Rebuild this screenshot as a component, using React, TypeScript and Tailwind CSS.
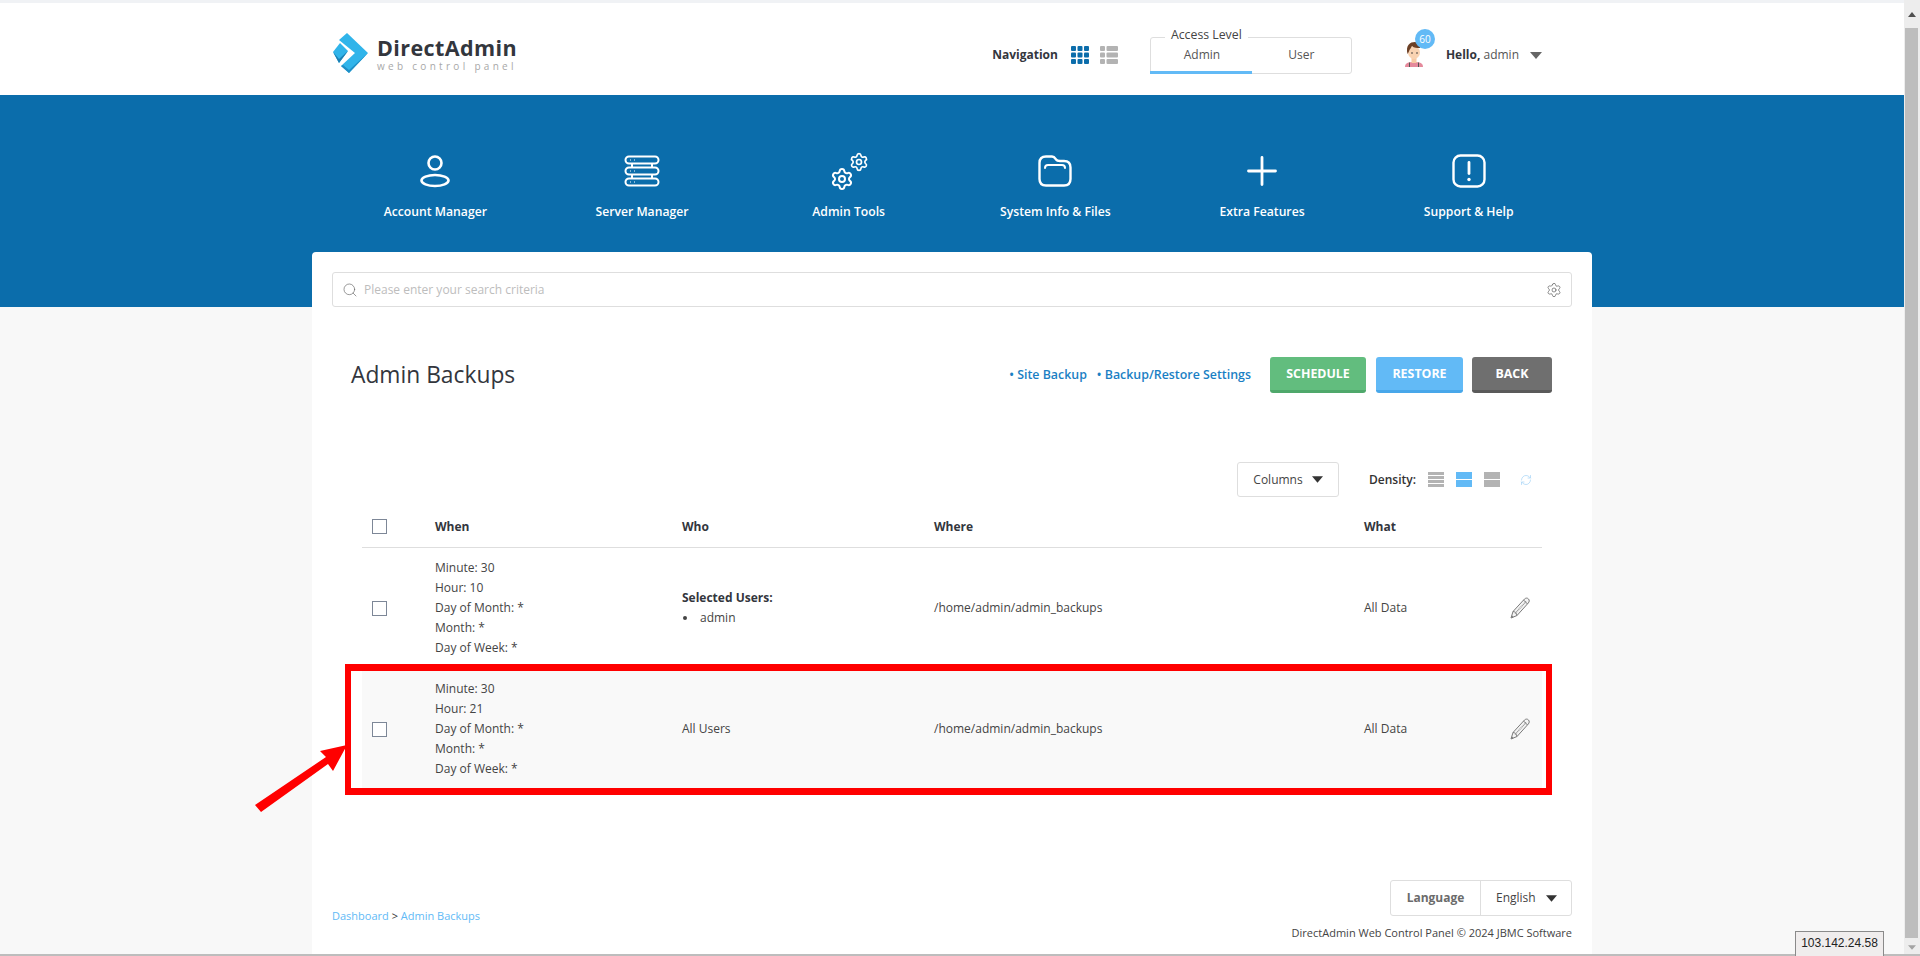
import React from "react";
import { Search, Settings, RefreshCw } from "lucide-react";

function Caret({ className }: { className: string }) {
  return (
    <svg viewBox="0 0 12 7" className={className}>
      <path d="M0 0h12L6 7z" fill="currentColor" />
    </svg>
  );
}

function Logo() {
  return (
    <div className="flex items-center -mt-[4px]">
      <svg viewBox="0 0 36 41" className="w-[36px] h-[41px] mr-[8px]">
        <path d="M14 0L35 20L16 40L8 33L22 20L6 7Z" fill="#30b4ea" />
        <path d="M35 20L16 40L8 33L10 32L16 37Z" fill="#1f8fc6" />
        <path d="M7 10L15 18L6 30L0 19Z" fill="#30b4ea" />
        <path d="M15 18L6 30L0 19L6 26Z" fill="#1b7fb3" />
      </svg>
      <div className="flex flex-col">
        <span className="text-[21.5px] leading-[25px] font-bold text-[#33363d] tracking-[0.4px]">DirectAdmin</span>
        <span className="text-[10px] leading-[12px] text-[#a8a8a8] tracking-[3.3px]">web control panel</span>
      </div>
    </div>
  );
}

function NavItem({ label, children }: { label: string; children: React.ReactNode }) {
  return (
    <div className="flex flex-col items-center">
      <div className="h-[38px] flex items-center justify-center text-white">{children}</div>
      <span className="mt-[12px] text-[12.2px] leading-[20px] font-semibold text-white">{label}</span>
    </div>
  );
}

function Checkbox() {
  return <span className="block w-[15px] h-[15px] border border-[#7d8797] bg-white" />;
}

function Schedule({ hour }: { hour: string }) {
  return (
    <div className="text-[12px] leading-[20px] text-[#444]">
      <div>Minute: 30</div>
      <div>Hour: {hour}</div>
      <div>Day of Month: *</div>
      <div>Month: *</div>
      <div>Day of Week: *</div>
    </div>
  );
}

function PencilIcon() {
  return (
    <svg viewBox="0 0 20 22" className="w-[20px] h-[22px]" fill="none" stroke="#7a7a7a" strokeWidth="1">
      <path d="M1 21L3 14.500L14.500 2C15.800 0.800 17.500 0.800 18.500 2C19.600 3.200 19.400 4.800 18.300 6L7 18.500Z" fill="#f4f4f4" />
      <path d="M3 14.500C5 14.500 6.500 16 7 18.500" />
      <path d="M1.600 19L3 20.400" strokeWidth="1.400" />
      <path d="M5 16.500L16.500 4" strokeDasharray="1 0.700" stroke="#999" strokeWidth="1.400" />
      <path d="M13.500 3L17.500 7" />
    </svg>
  );
}

const rowGrid = "grid grid-cols-[73px_247px_252px_430px_1fr_60px] items-center";

function Row({ hour, who, shaded }: { hour: string; who: React.ReactNode; shaded?: boolean }) {
  return (
    <div className={`${rowGrid} h-[121px] pb-[1px] text-[12px] text-[#444] ${shaded ? "bg-[#f9f9f9]" : "bg-white"}`}>
      <div className="pl-[10px]"><Checkbox /></div>
      <Schedule hour={hour} />
      <div>{who}</div>
      <div>/home/admin/admin_backups</div>
      <div>All Data</div>
      <div className="pl-[28px]"><PencilIcon /></div>
    </div>
  );
}

function Bars({ rows, color }: { rows: number; color: string }) {
  return (
    <span className="flex flex-col justify-between w-[16px] h-[15px]">
      {Array.from({ length: rows }).map((_, i) => (
        <span key={i} className={`block flex-1 ${color} ${i > 0 ? "mt-[1px]" : ""}`} />
      ))}
    </span>
  );
}

export default function App() {
  return (
    <div className="relative h-[956px] w-full overflow-hidden bg-[#f8f8f8] font-['Open_Sans',sans-serif] text-[#333] flex">
      <div className="w-[1904px] shrink-0 flex flex-col">
        <div className="h-[3px] bg-[#f0f2f5]" />
        <header className="h-[92px] bg-white flex items-center pt-[12px] pl-[333px] pr-[362px]">
          <Logo />
          <div className="ml-auto flex items-center">
            <span className="text-[12px] font-bold text-[#33363d]">Navigation</span>
            <svg viewBox="0 0 18 18" className="w-[18px] h-[18px] ml-[13px]" fill="#0b6dab">
              {[0, 6.5, 13].flatMap((x) =>
                [0, 6.5, 13].map((y) => <rect key={`${x}-${y}`} x={x} y={y} width="5" height="5" rx="1" />)
              )}
            </svg>
            <svg viewBox="0 0 18 18" className="w-[18px] h-[18px] ml-[11px]" fill="#b3b3b3">
              {[0, 6.5, 13].map((y) => (
                <g key={y}>
                  <rect x="0" y={y} width="5" height="5" rx="1" />
                  <rect x="6.5" y={y} width="11.5" height="5" rx="1" />
                </g>
              ))}
            </svg>
            <div className="relative ml-[32px] w-[202px] h-[37px] border border-[#dedede] rounded-[3px] flex text-[12px] text-[#555]">
              <span className="absolute -top-[11px] left-[14px] bg-white px-[6px] text-[12.3px] leading-[16px] text-[#444]">Access Level</span>
              <span className="w-[102px] pt-[2px] flex items-center justify-center border-b-[3px] border-[#62baf6] -mb-px -ml-px pl-[2px]">Admin</span>
              <span className="flex-1 flex items-center justify-center">User</span>
            </div>
            <div className="relative ml-[52px] w-[22px] h-[28px]">
              <svg viewBox="0 0 20 26" className="w-[20px] h-[26px]">
                <path d="M1 26c0-4 3-5 9-5s9 1 9 5z" fill="#e58a9c" />
                <path d="M5.500 21.500V26M14.500 21.500V26" stroke="#555" strokeWidth="1" />
                <rect x="7.500" y="16" width="5" height="6" fill="#f7c9a4" />
                <ellipse cx="10" cy="11.500" rx="6" ry="6.500" fill="#f9d3b2" />
                <path d="M3.500 13C1.500 4 6 1 11 1c4 0 6 3 5 6-3 0-6 0-8-2-1 2-2 3-2.500 4-.5 1-1 3-2 4z" fill="#6b3f25" />
                <circle cx="8" cy="12" r="0.800" fill="#333" />
                <circle cx="13" cy="12" r="0.800" fill="#333" />
              </svg>
              <span className="absolute -top-[12px] left-[11px] w-[20px] h-[20px] rounded-full bg-[#62baf6] text-white text-[10px] leading-[20px] text-center">60</span>
            </div>
            <span className="ml-[20px] text-[12px] text-[#555]"><b className="text-[#33363d]">Hello,</b> admin</span>
            <Caret className="ml-[11px] w-[12px] h-[7px] text-[#666]" />
          </div>
        </header>

        <div className="h-[212px] bg-[#0b6dab] shrink-0 pl-[332px] pr-[332px] pt-[57px]">
          <div className="grid grid-cols-6">
            <NavItem label="Account Manager">
              <svg viewBox="0 0 32 34" className="w-[32px] h-[34px]" fill="none" stroke="white" strokeWidth="2.6">
                <circle cx="16" cy="9" r="6.5" />
                <ellipse cx="16" cy="26.5" rx="13.5" ry="5.5" />
              </svg>
            </NavItem>
            <NavItem label="Server Manager">
              <svg viewBox="0 0 36 32" className="w-[36px] h-[32px]" fill="none" stroke="white" strokeWidth="2">
                <rect x="1.5" y="1.5" width="33" height="7" rx="3.5" />
                <rect x="1.5" y="12.5" width="33" height="7" rx="3.5" />
                <rect x="1.5" y="23.5" width="33" height="7" rx="3.5" />
                <path d="M8 8.5v4M28 8.5v4M8 19.5v4M28 19.5v4" />
                <path d="M6 5h1M10 5h1M6 16h1M10 16h1M6 27h1M10 27h1" strokeWidth="1" />
              </svg>
            </NavItem>
            <NavItem label="Admin Tools">
              <svg viewBox="0 0 40 40" className="w-[40px] h-[40px]">
                <Settings x={1} y={16} width={24} height={24} stroke="white" strokeWidth={2} />
                <Settings x={20} y={1} width={20} height={20} stroke="white" strokeWidth={2} />
              </svg>
            </NavItem>
            <NavItem label="System Info & Files">
              <svg viewBox="0 0 34 32" className="w-[34px] h-[32px]" fill="none" stroke="white" strokeWidth="2.4" strokeLinecap="round">
                <path d="M1.500 8C1.500 4 4 1.500 8 1.500h6c2.500 0 3 1.500 4 3s2 1.500 4 1.500h4c4 0 6.500 2.500 6.500 6.500V24c0 4-2.500 6.500-6.500 6.500H8C4 30.500 1.500 28 1.500 24z" />
                <path d="M7 13c0-2 1-3 3-3h14c2 0 3 1 3 3" strokeWidth="2" />
              </svg>
            </NavItem>
            <NavItem label="Extra Features">
              <svg viewBox="0 0 30 30" className="w-[30px] h-[30px]" fill="none" stroke="white" strokeWidth="2.800" strokeLinecap="round">
                <path d="M15 1.500v27M1.500 15h27" />
              </svg>
            </NavItem>
            <NavItem label="Support & Help">
              <svg viewBox="0 0 34 34" className="w-[34px] h-[34px]" fill="none" stroke="white" strokeWidth="2.400" strokeLinecap="round">
                <rect x="1.500" y="1.500" width="31" height="31" rx="7" />
                <path d="M17 8.500v11" strokeWidth="2.800" />
                <path d="M17 25.500v0.100" strokeWidth="3.400" />
              </svg>
            </NavItem>
          </div>
        </div>

        <main className="mx-auto -mt-[55px] w-[1280px] h-[704px] shrink-0 bg-white rounded-t-[4px] px-[20px] pt-[20px]">
          <div className="flex items-center h-[35px] border border-[#dedede] rounded-[3px] pl-[9px] pr-[9px]">
            <Search size={16} strokeWidth={1} className="text-[#666]" />
            <span className="ml-[6px] text-[12px] text-[#bdbdbd]">Please enter your search criteria</span>
            <Settings size={16} strokeWidth={1} className="ml-auto text-[#555]" />
          </div>

          <div className="mt-[50px] pl-[19px] pr-[20px] flex items-center h-[36px]">
            <h1 className="text-[22.800px] font-medium leading-[34px] text-[#33363d]">Admin Backups</h1>
            <div className="ml-auto flex items-center text-[12.4px] font-semibold text-[#1a7fc4]">
              <span>• Site Backup</span>
              <span className="ml-[10px]">• Backup/Restore Settings</span>
            </div>
            <button className="ml-[19px] w-[96px] h-[36px] pt-[2px] rounded-[3px] bg-[#62bd7e] border-b-[3px] border-[#4fa86b] text-white text-[12.4px] font-bold">SCHEDULE</button>
            <button className="ml-[10px] w-[87px] h-[36px] pt-[2px] rounded-[3px] bg-[#62baf6] border-b-[3px] border-[#48a7ea] text-white text-[12.4px] font-bold">RESTORE</button>
            <button className="ml-[9px] w-[80px] h-[36px] pt-[2px] rounded-[3px] bg-[#6f6f6f] border-b-[3px] border-[#5a5a5a] text-white text-[12.4px] font-bold">BACK</button>
          </div>

          <div className="mt-[69px] pr-[40px] flex items-center justify-end h-[35px]">
            <div className="w-[102px] h-[35px] border border-[#dedede] rounded-[3px] flex items-center justify-center text-[12px] text-[#444]">
              Columns
              <Caret className="ml-[9px] w-[11px] h-[7px] text-[#333]" />
            </div>
            <span className="ml-[30px] text-[12px] font-semibold text-[#333]">Density:</span>
            <span className="ml-[12px]"><Bars rows={4} color="bg-[#b3b3b3]" /></span>
            <span className="ml-[12px]"><Bars rows={2} color="bg-[#62baf6]" /></span>
            <span className="ml-[12px]"><Bars rows={2} color="bg-[#b3b3b3]" /></span>
            <RefreshCw size={12} strokeWidth={1.5} className="ml-[20px] text-[#a9d6f7]" />
          </div>

          <div className="mt-[9px] ml-[30px] w-[1180px]">
            <div className={`${rowGrid} h-[42px] border-b border-[#dedede] text-[12px] font-bold text-[#33363d]`}>
              <div className="pl-[10px]"><Checkbox /></div>
              <div>When</div>
              <div>Who</div>
              <div>Where</div>
              <div>What</div>
              <div />
            </div>
            <Row
              hour="10"
              who={
                <div className="leading-[20px]">
                  <div className="font-bold text-[#33363d]">Selected Users:</div>
                  <div className="flex items-center"><span className="w-[4px] h-[4px] ml-[1px] rounded-full bg-[#444] mr-[13px]" />admin</div>
                </div>
              }
            />
            <Row hour="21" who="All Users" shaded />
          </div>

          <div className="mt-[90px] flex justify-end">
            <div className="h-[36px] w-[182px] border border-[#dedede] rounded-[3px] flex items-center text-[12px]">
              <span className="w-[90px] h-full flex items-center justify-center font-bold text-[#6b6b6b] border-r border-[#dedede]">Language</span>
              <span className="ml-[15px] text-[#444]">English</span>
              <Caret className="ml-[10px] w-[11px] h-[7px] text-[#333]" />
            </div>
          </div>
          <div className="flex items-start justify-between text-[11px] leading-[16px]">
            <span className="-mt-[8px] text-[#62baf6]">Dashboard <span className="text-[#333]">&gt;</span> Admin Backups</span>
            <span className="mt-[9px] text-[#444]">DirectAdmin Web Control Panel © 2024 JBMC Software</span>
          </div>
        </main>
      </div>

      <div className="w-[16px] shrink-0 bg-[#ededed] flex flex-col pl-[1px] pr-[2px]">
        <div className="h-[28px] flex items-center justify-center"><svg viewBox="0 0 8 5" className="w-[8px] h-[5px]"><path d="M0 5h8L4 0z" fill="#505050" /></svg></div>
        <div className="flex-1 bg-[#bdbdbd]" />
        <div className="h-[18px] flex items-center justify-center"><Caret className="w-[8px] h-[5px] text-[#a3a3a3]" /></div>
      </div>

      <div className="absolute left-0 right-0 bottom-0 h-[2px] bg-[#bdbdbd]" />
      <div className="absolute left-[1795px] top-[931px] w-[89px] h-[25px] border border-[#8a8a8a] border-b-0 bg-[#f0eded] font-['Liberation_Sans',sans-serif] text-[12px] leading-[23px] text-center text-[#222]">103.142.24.58</div>

      <div className="absolute left-[345px] top-[664px] w-[1207px] h-[131px] border-x-[6px] border-y-[7px] border-[#ff0000]" />
      <svg className="absolute left-[250px] top-[740px] w-[105px] h-[75px]" viewBox="0 0 105 75">
        <path d="M11 72L5 65L76 17L70 11L97 5L83 31L78 24Z" fill="#ff0000" />
      </svg>
    </div>
  );
}
